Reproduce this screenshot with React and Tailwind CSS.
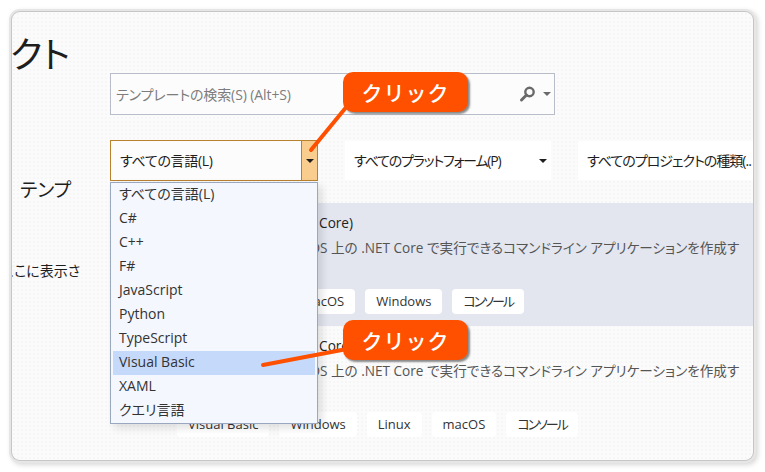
import React from 'react';

const languages = ['すべての言語(L)', 'C#', 'C++', 'F#', 'JavaScript', 'Python', 'TypeScript', 'Visual Basic', 'XAML', 'クエリ言語'];

const desc = 'Windows、Linux、macOS 上の .NET Core で実行できるコマンドライン アプリケーションを作成す';

function Caret({ className = 'border-t-[#1e1e1e]' }) {
  return <span className={`block w-0 h-0 border-x-[4px] border-x-transparent border-t-[4px] ${className}`} />;
}

function Tag({ children }) {
  const kana = children === 'コンソール';
  return (
    <span className={`h-[25px] px-[11px] flex items-center bg-white rounded-[4px] text-[13px] text-[#333] ${kana ? 'tracking-[-2px]' : ''}`}>
      {children}
    </span>
  );
}

function TemplateItem({ active, tags }) {
  return (
    <div className={`pl-[67px] pt-[10px] h-[123px] ${active ? 'bg-[#e3e6ef]' : ''}`}>
      <div className="text-[13.6px] leading-[20px] text-[#222] whitespace-nowrap">コンソール アプリ (.NET Core)</div>
      <div className="mt-[5px] text-[13.6px] leading-[20px] text-[#555] whitespace-nowrap">{desc}</div>
      <div className="mt-[31px] flex gap-[10px]">
        {tags.map(t => <Tag key={t}>{t}</Tag>)}
      </div>
    </div>
  );
}

function Callout({ className }) {
  return (
    <div className={`absolute left-[331px] w-[125px] h-[40px] pt-[3px] flex items-center justify-center bg-[#ff5000] rounded-[10px] shadow-[2px_2px_2px_#8a8a8a] text-white text-[21px] font-medium tracking-[1px] [font-feature-settings:normal] ${className}`}>
      クリック
    </div>
  );
}

export default function App() {
  return (
    <div className="w-[765px] h-[472px] bg-white p-[12px] overflow-hidden font-['Open_Sans','Noto_Sans_CJK_JP',sans-serif] [font-feature-settings:'palt']">
      <div className="relative w-[741px] h-[448px] flex rounded-[8px] bg-[#fbfbfb] bg-[radial-gradient(#f6f6f6_1px,transparent_1px)] bg-[length:4px_4px] shadow-[0_0_0_1px_#c6c6c6,0_0_0_3px_#e6e6e6,2px_2px_5px_3px_#d8d8d8]">
        <div className="w-[98px] shrink-0 overflow-hidden rounded-l-[8px] text-[#1e1e1e]">
          <div className="-ml-[2px] mt-[18px] h-[50px] text-[36px] leading-[50px] whitespace-nowrap">クト</div>
          <div className="mt-[97px] text-[19px] leading-[26px] whitespace-nowrap pl-[8px]">テンプ</div>
          <div className="-ml-[10px] mt-[58px] text-[14px] leading-[20px] whitespace-nowrap">ここに表示さ</div>
        </div>

        <div className="flex-1 min-w-0 overflow-hidden rounded-r-[8px]">
          <div className="mt-[61px] w-[445px] h-[42px] flex items-center border border-[#b9bcc9] bg-[#fcfcfc] pl-[5px] pr-[3px]">
            <span className="flex-1 text-[14px] tracking-[-0.1px] text-[#7d7d7d]">テンプレートの検索(S) (Alt+S)</span>
            <svg width="18" height="18" viewBox="0 0 18 18" fill="none" className="mr-[6px]">
              <circle cx="10.5" cy="7" r="4.2" stroke="#6a6a6a" strokeWidth="2.4" />
              <path d="M7.5 10 L2.5 15" stroke="#6a6a6a" strokeWidth="3" strokeLinecap="round" />
            </svg>
            <Caret className="border-t-[#6a6a6a]" />
          </div>

          <div className="mt-[25px] flex items-center gap-[27px] whitespace-nowrap">
            <div className="w-[208px] shrink-0 h-[41px] flex border border-[#b8812e] bg-[#fcfcfc]">
              <span className="flex-1 pl-[9px] flex items-center text-[14px] tracking-[-0.3px] text-[#1e1e1e]">すべての言語(L)</span>
              <span className="w-[16px] flex items-center justify-center border-l border-[#b8812e] bg-[#f8cd8e]">
                <Caret />
              </span>
            </div>
            <div className="w-[206px] shrink-0 h-[39px] flex items-center justify-between pl-[9px] pr-[4px] bg-white text-[14px] tracking-[-1.2px] text-[#1e1e1e]">
              <span>すべてのプラットフォーム(P)</span>
              <Caret />
            </div>
            <div className="flex-1 min-w-0 h-[39px] flex items-center pl-[9px] bg-white text-[14px] tracking-[-1px] text-[#1e1e1e] overflow-hidden">
              すべてのプロジェクトの種類(..
            </div>
          </div>

          <div className="mt-[22px]">
            <TemplateItem active tags={['C#', 'Linux', 'macOS', 'Windows', 'コンソール']} />
            <TemplateItem tags={['Visual Basic', 'Windows', 'Linux', 'macOS', 'コンソール']} />
          </div>
        </div>

        {/* dropdown list over the content */}
        <div className="absolute left-[98px] top-[170px] w-[208px] h-[242px] border border-[#9aa8bf] bg-[#f4f7fe] shadow-[4px_4px_8px_rgba(0,0,0,0.12)] px-[2px]">
          {languages.map(l => (
            <div
              key={l}
              className={`h-[24px] pl-[6px] pb-[3px] flex items-center text-[14px] text-[#333] ${l === 'Visual Basic' ? 'bg-[#c5d9fb]' : ''}`}
            >
              {l}
            </div>
          ))}
        </div>

        {/* leader lines for the callouts */}
        <svg className="absolute left-0 top-0 pointer-events-none" width="741" height="448" fill="none">
          <path d="M336 93 L299 138" stroke="#ff5000" strokeWidth="4" strokeLinecap="round" />
          <path d="M335 337 L251 353" stroke="#ff5000" strokeWidth="4" strokeLinecap="round" />
        </svg>
        <Callout className="top-[60px]" />
        <Callout className="top-[308px]" />
      </div>
    </div>
  );
}
